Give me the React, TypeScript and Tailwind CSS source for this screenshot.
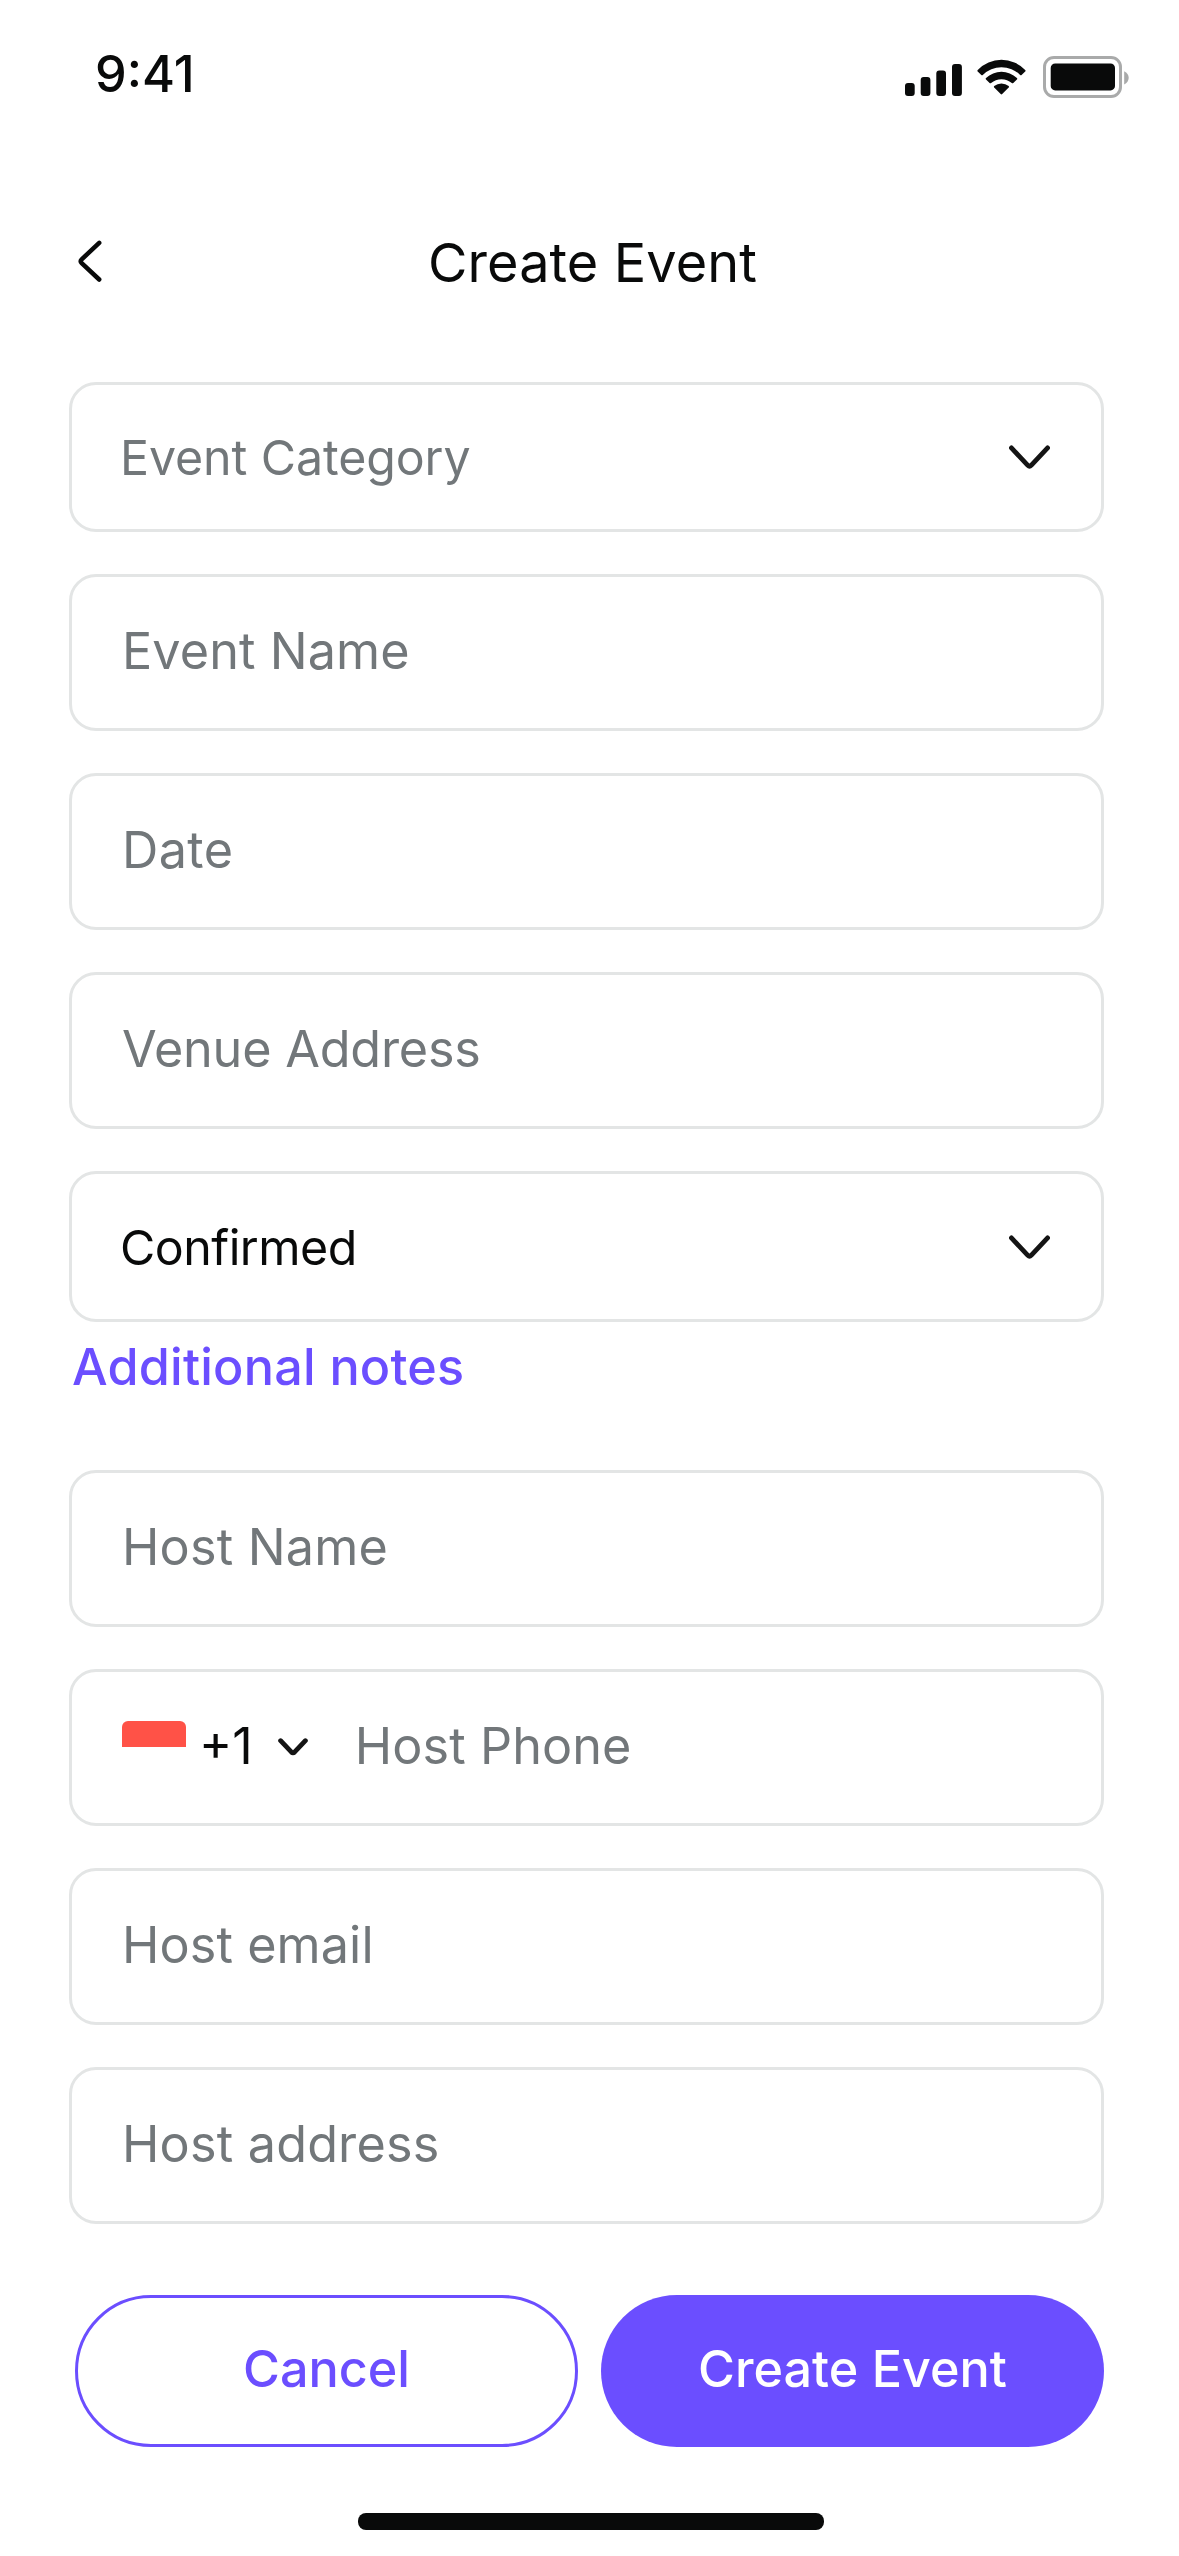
import type { ReactNode } from 'react'

function SignalIcon() {
  return (
    <svg className="h-[34px] w-[57px]" viewBox="0 0 57 34" fill="#090a0a">
      <rect x="0" y="20" width="9.7" height="13" rx="3" />
      <rect x="15.7" y="14" width="9.7" height="19" rx="3" />
      <rect x="31.3" y="7.5" width="9.7" height="25.5" rx="3" />
      <rect x="47" y="1" width="9.9" height="32" rx="3" />
    </svg>
  )
}

function WifiIcon() {
  return (
    <svg className="h-[36px] w-[49px]" viewBox="0 0 49 36" fill="#090a0a">
      <path d="M0.7 10.9A33 33 0 0 1 48.2 10.9Q49 11.7 48.2 12.5L44.6 15.9Q43.9 16.6 43.1 15.9A26.5 26.5 0 0 0 5.8 15.9Q5 16.6 4.3 15.9L0.7 12.5Q0 11.7 0.7 10.9Z" />
      <path d="M9 18.9A22.6 22.6 0 0 1 39.9 18.9Q40.7 19.7 39.9 20.5L36.3 24Q35.6 24.7 34.8 24A15.8 15.8 0 0 0 14.1 24Q13.3 24.7 12.6 24L9 20.5Q8.2 19.7 9 18.9Z" />
      <path d="M17.2 27.1A11.6 11.6 0 0 1 31.7 27.1Q32.4 27.8 31.7 28.6L25.2 35.1Q24.45 35.8 23.7 35.1L17.2 28.6Q16.5 27.8 17.2 27.1Z" />
    </svg>
  )
}

function BatteryIcon() {
  return (
    <svg className="h-[42px] w-[86px]" viewBox="0 0 86 42">
      <rect x="1.5" y="1.5" width="76" height="39" rx="9.5" fill="none" stroke="#a9aaaa" strokeWidth="3" />
      <rect x="7.7" y="7.4" width="64.3" height="27" rx="4.5" fill="#090a0a" />
      <path d="M81.2 15.2v13.2c2.8-1.2 4.5-3.7 4.5-6.6s-1.7-5.4-4.5-6.6z" fill="#a9aaaa" />
    </svg>
  )
}

function ChevronDown() {
  return (
    <svg className="h-[24px] w-[41px]" viewBox="0 0 41 24" fill="none" stroke="#141414" strokeWidth="4.8" strokeLinecap="round">
      <path d="M2.4 2.9L18.8 20.3Q20.5 22 22.2 20.3L38.6 2.9" />
    </svg>
  )
}

function SmallChevron() {
  return (
    <svg className="h-[18px] w-[30px]" viewBox="0 0 30 18" fill="none" stroke="#141414" strokeWidth="4.8" strokeLinecap="round">
      <path d="M2.6 2.7L13.5 14.2Q15 15.7 16.5 14.2L27.4 2.7" />
    </svg>
  )
}

function Field({ children }: { children: ReactNode }) {
  return (
    <div className="flex h-[157px] w-full items-center rounded-[27px] border-[3px] border-[#e3e5e5] pb-[2px] pl-[50px] text-[50.3px] text-[#72777a]">
      {children}
    </div>
  )
}

function SelectField({ label, placeholder = false }: { label: string; placeholder?: boolean }) {
  return (
    <button
      className={
        'flex w-full items-center justify-between rounded-[27px] border-[3px] border-[#e3e5e5] pr-[51px] pl-[48px] text-[48.3px] ' +
        (placeholder ? 'h-[150px] tracking-[-0.1px] text-[#72777a]' : 'h-[151px] tracking-[-0.5px] text-[#090a0a]')
      }
    >
      <span className="pt-[3px]">{label}</span>
      <ChevronDown />
    </button>
  )
}

export default function App() {
  return (
    <main className="flex h-[2556px] w-[1179px] flex-col bg-white font-['Inter',sans-serif] leading-none text-[#090a0a]">
      <div className="flex h-[147px] items-start justify-between pr-[50px] pl-[95px]">
        <span className="pt-12 text-[50.3px] leading-[51px] font-medium">9:41</span>
        <div className="flex items-start pt-14">
          <div className="pt-[7px]"><SignalIcon /></div>
          <div className="pt-[3px] pl-[15px]"><WifiIcon /></div>
          <div className="pl-[17px]"><BatteryIcon /></div>
        </div>
      </div>

      <header className="grid h-[235px] grid-cols-[110px_1fr_104px] items-start pt-[83px]">
        <button className="pt-[10px] pl-[78px]" aria-label="Back">
          <svg className="h-[43px] w-[25px]" viewBox="0 0 25 43" fill="none" stroke="#090a0a" strokeWidth="4.5" strokeLinecap="round">
            <path d="M21.2 2.9L3.7 19.3Q1.8 21.2 3.7 23.1L21.2 39.5" />
          </svg>
        </button>
        <h1 className="flex justify-center text-[54px] leading-[66px] font-normal tracking-[0.1px]">Create Event</h1>
      </header>

      <form className="flex flex-col pr-[75px] pl-[69px]">
        <div className="flex flex-col gap-[42px]">
          <SelectField label="Event Category" placeholder />
          <Field><span className="tracking-[0.1px]">Event Name</span></Field>
          <Field><span className="tracking-[0.4px]">Date</span></Field>
          <Field><span className="tracking-[-0.2px]">Venue Address</span></Field>
          <SelectField label="Confirmed" />
        </div>

        <a className="h-[148px] pt-[14px] pl-[3px] text-[50.3px] leading-[61px] font-medium tracking-[0.2px] text-[#6b4eff]">Additional notes</a>

        <div className="flex flex-col gap-[42px]">
          <Field><span className="tracking-[0.2px]">Host Name</span></Field>
          <Field>
            <span className="flex h-[51px] w-[64px] flex-col overflow-hidden rounded-[6px]">
              <span className="h-[26px] bg-[#ff5247]" />
              <span className="flex-1 bg-white" />
            </span>
            <span className="pl-[13px] text-[#090a0a]">+1</span>
            <span className="pl-[25px]"><SmallChevron /></span>
            <span className="pl-[47px] tracking-[0.1px]">Host Phone</span>
          </Field>
          <Field><span className="tracking-[0.1px]">Host email</span></Field>
          <Field><span className="tracking-[0.2px]">Host address</span></Field>
        </div>
      </form>

      <div className="flex gap-[23px] pt-[71px] pr-[75px] pl-[75px] text-[50.3px] font-medium">
        <button className="h-[152px] w-[503px] rounded-full border-[3px] border-[#6b4eff] pb-1 text-[#6b4eff]">Cancel</button>
        <button className="h-[152px] w-[503px] rounded-full bg-[#6b4eff] pb-1 text-white">Create Event</button>
      </div>

      <div className="mt-[66px] ml-[358px] h-[17px] w-[466px] rounded-[8px] bg-[#090a0a]" />
    </main>
  )
}
